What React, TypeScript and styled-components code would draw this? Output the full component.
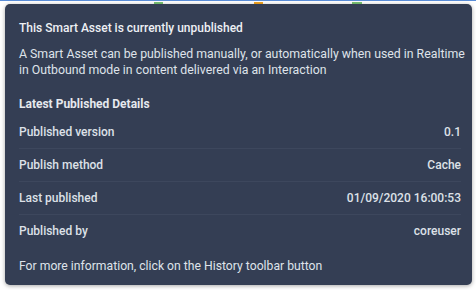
import React from "react";
import styled, { createGlobalStyle } from "styled-components";

const Global = createGlobalStyle`
  html, body { margin: 0; padding: 0; background: #f4f6f9; }
  body { font-family: Roboto, "Liberation Sans", Arial, sans-serif; width: 476px; height: 290px; overflow: hidden; }
`;

const Page = styled.div`
  position: relative;
  width: 476px;
  height: 290px;
  background: #ffffff;
  border-top: 1px solid #5b8ed8;
  box-sizing: border-box;
  padding: 3px 4px 0 5px;
`;

const Tab = styled.div<{ $left: number; $w: number; $color: string }>`
  position: absolute;
  top: 1px;
  left: ${(p) => p.$left}px;
  width: ${(p) => p.$w}px;
  height: 4px;
  background: ${(p) => p.$color};
`;

const Panel = styled.div`
  position: relative;
  width: 467px;
  height: 281px;
  box-sizing: border-box;
  background: #343e54;
  border-radius: 5px;
  box-shadow: 0 1px 4px rgba(0, 0, 0, 0.35);
  padding: 16px 11px 0 14px;
  color: #e6e9ee;
  font-size: 12px;
  white-space: nowrap;
  display: flex;
  flex-direction: column;
`;

const Title = styled.div`
  font-weight: 500;
  line-height: 16px;
  color: #eef0f4;
`;

const Desc = styled.div`
  margin-top: 10px;
  font-size: 12.3px;
  line-height: 16px;
  color: #dfe3ea;
`;

const SectionTitle = styled.div`
  margin-top: 18px;
  font-weight: 700;
  line-height: 16px;
  color: #e6e9ee;
`;

const Rows = styled.div`
  margin-top: 4px;
  display: flex;
  flex-direction: column;
`;

const Row = styled.div<{ $last?: boolean }>`
  display: flex;
  justify-content: space-between;
  align-items: center;
  height: 32px;
  border-bottom: 1px solid ${(p) => (p.$last ? "transparent" : "#3d475d")};
  font-weight: 500;
  color: #dde1e8;
`;

const Footer = styled.div`
  margin-top: 10px;
  font-size: 12.2px;
  line-height: 16px;
  color: #dfe3ea;
`;

const rows = [
  ["Published version", "0.1"],
  ["Publish method", "Cache"],
  ["Last published", "01/09/2020 16:00:53"],
  ["Published by", "coreuser"],
];

export default function App() {
  return (
    <>
      <Global />
      <Page>
        <Tab $left={154} $w={9} $color="#7cc576" />
        <Tab $left={254} $w={9} $color="#f5a623" />
        <Tab $left={352} $w={10} $color="#7cc576" />
        <Panel>
          <Title>This Smart Asset is currently unpublished</Title>
          <Desc>
            A Smart Asset can be published manually, or automatically when used in Realtime
            <br />
            in Outbound mode in content delivered via an Interaction
          </Desc>
          <SectionTitle>Latest Published Details</SectionTitle>
          <Rows>
            {rows.map(([k, v], i) => (
              <Row key={k} $last={i === rows.length - 1}>
                <span>{k}</span>
                <span>{v}</span>
              </Row>
            ))}
          </Rows>
          <Footer>For more information, click on the History toolbar button</Footer>
        </Panel>
      </Page>
    </>
  );
}
